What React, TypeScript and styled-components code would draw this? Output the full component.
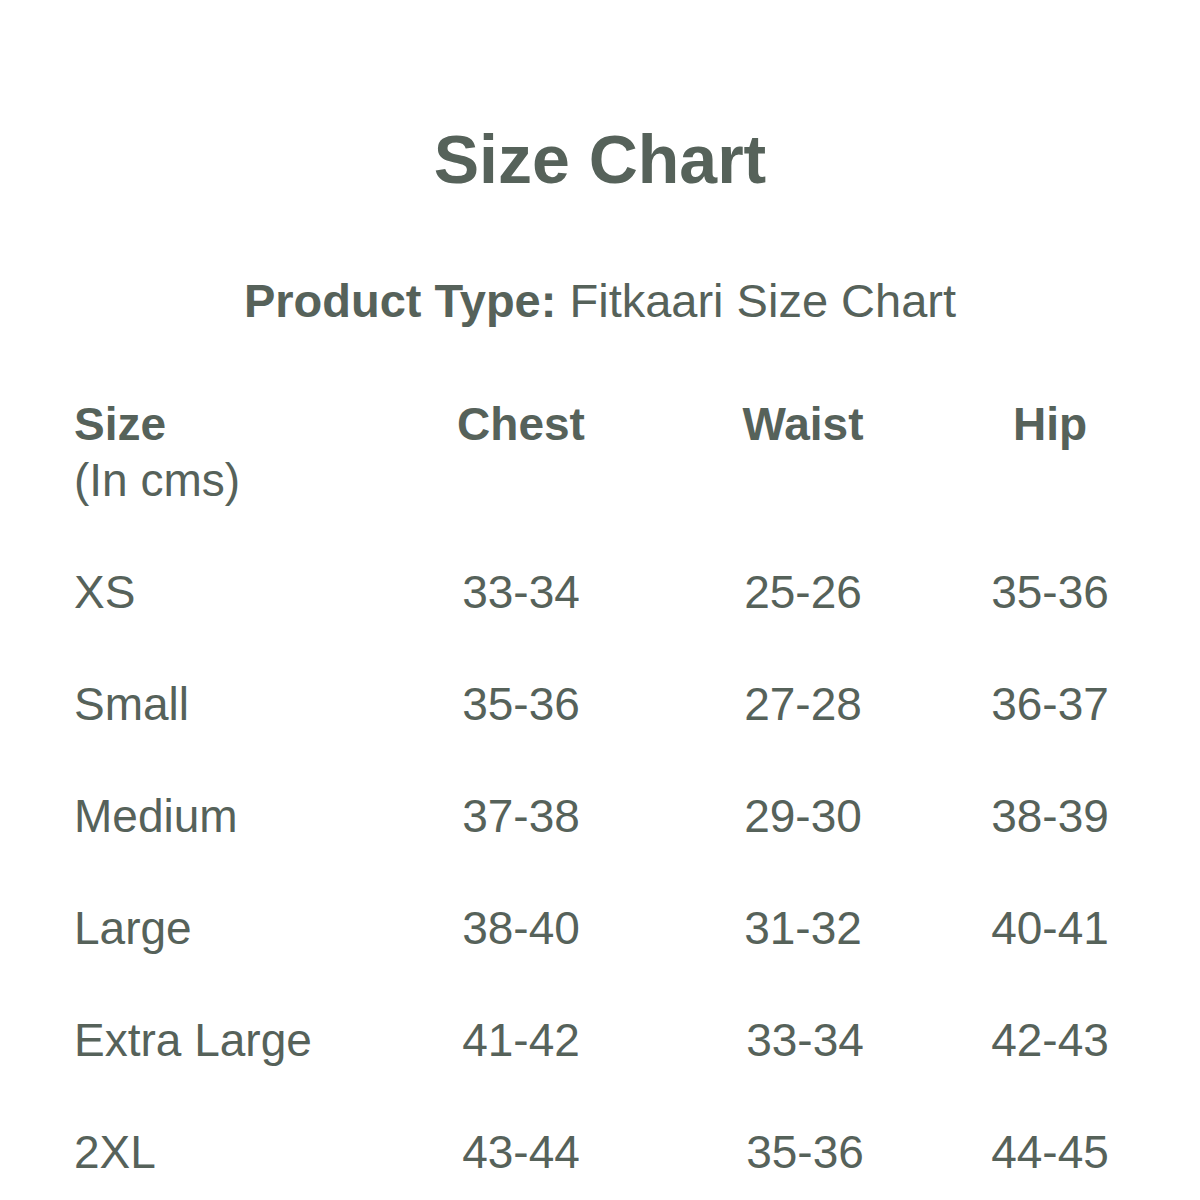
import React from "react";
import styled, { createGlobalStyle } from "styled-components";

const Global = createGlobalStyle`
  html, body { margin: 0; padding: 0; background: #ffffff; }
  body { font-family: "Liberation Sans", Arial, sans-serif; color: #56625a; }
`;

const Page = styled.div`
  width: 1200px;
  height: 1200px;
  overflow: hidden;
  padding-top: 121px;
  box-sizing: border-box;
  display: flex;
  flex-direction: column;
  align-items: center;
`;

const Title = styled.h1`
  margin: 0;
  font-size: 68px;
  line-height: 76px;
  font-weight: 700;
  text-align: center;
`;

const Subtitle = styled.p`
  margin: 76px 0 0;
  font-size: 47px;
  line-height: 56px;
  text-align: center;
  b { font-weight: 700; }
`;

const Table = styled.div`
  align-self: stretch;
  margin-top: 67px;
  padding-left: 74px;
  display: grid;
  grid-template-columns: 306px 282px 282px 212px;
  row-gap: 56px;
  font-size: 46px;
  line-height: 56px;
`;

const Cell = styled.div<{ $head?: boolean; $first?: boolean; $shift?: number }>`
  font-weight: ${(p) => (p.$head ? 700 : 400)};
  text-align: ${(p) => (p.$first ? "left" : "center")};
  padding-left: ${(p) => (p.$shift ? `${p.$shift}px` : 0)};
  white-space: nowrap;
`;

const Note = styled.span`
  display: block;
  font-weight: 400;
`;

const rows: [string, string, string, string, number?][] = [
  ["XS", "33-34", "25-26", "35-36"],
  ["Small", "35-36", "27-28", "36-37"],
  ["Medium", "37-38", "29-30", "38-39"],
  ["Large", "38-40", "31-32", "40-41"],
  ["Extra Large", "41-42", "33-34", "42-43", 4],
  ["2XL", "43-44", "35-36", "44-45", 4],
];

export default function App() {
  return (
    <Page>
      <Global />
      <Title>Size Chart</Title>
      <Subtitle>
        <b>Product Type:</b> Fitkaari Size Chart
      </Subtitle>
      <Table>
        <Cell $head $first>
          Size
          <Note>(In cms)</Note>
        </Cell>
        <Cell $head>Chest</Cell>
        <Cell $head>Waist</Cell>
        <Cell $head>Hip</Cell>
        {rows.map(([s, c, w, h, shift]) => (
          <React.Fragment key={s}>
            <Cell $first>{s}</Cell>
            <Cell>{c}</Cell>
            <Cell $shift={shift}>{w}</Cell>
            <Cell>{h}</Cell>
          </React.Fragment>
        ))}
      </Table>
    </Page>
  );
}
